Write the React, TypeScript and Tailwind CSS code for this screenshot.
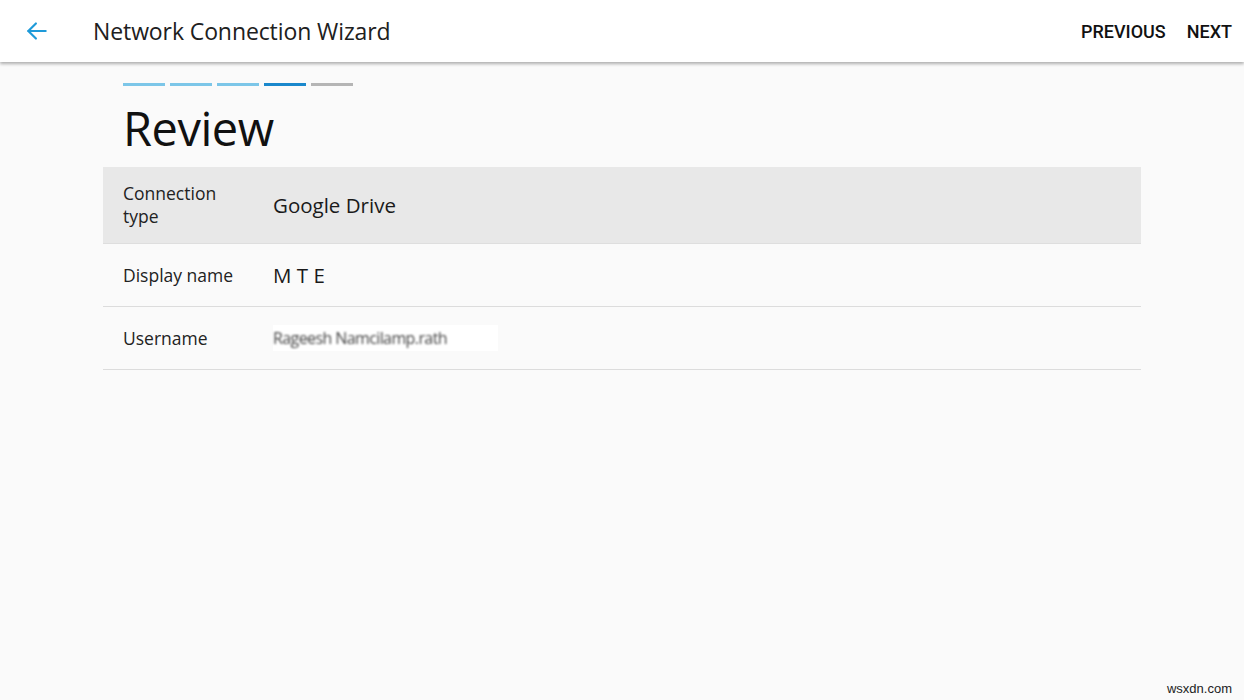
import React from "react";

const rows = [
	{ label: "Connection type", value: "Google Drive" },
	{ label: "Display name", value: "M T E" },
	{ label: "Username", value: "" },
];

export default function App() {
	return (
		<div
			className="relative w-[1244px] h-[700px] bg-[#fafafa] overflow-hidden"
			style={{ fontFamily: "'Open Sans', 'Noto Sans', sans-serif" }}
		>
			{/* App bar */}
			<header className="h-[62px] bg-white flex items-center shadow-[0_2px_3px_rgba(0,0,0,0.3)] relative z-10">
				<button type="button" className="w-[74px] flex items-center justify-center text-[#1e9ad9]">
					<svg width="26" height="26" viewBox="0 0 24 24" fill="none" stroke="currentColor" strokeWidth="2" strokeLinecap="round" strokeLinejoin="round">
						<path d="M20 12H4" />
						<path d="M11 5l-7 7 7 7" />
					</svg>
				</button>
				<h1 className="ml-[19px] text-[23px] text-[#202020] tracking-[-0.1px]">Network Connection Wizard</h1>
				<div
					className="ml-auto flex items-center gap-[21px] pr-[12px] text-[18px] font-medium text-[#111]"
					style={{ fontFamily: "Roboto, sans-serif" }}
				>
					<button type="button">PREVIOUS</button>
					<button type="button">NEXT</button>
				</div>
			</header>

			<main className="px-[103px] w-[1244px]">
				<div className="pl-[20px] pt-[21px] flex gap-[5px]">
					<span className="w-[42px] h-[3px] bg-[#7cc6e8]" />
					<span className="w-[42px] h-[3px] bg-[#7cc6e8]" />
					<span className="w-[42px] h-[3px] bg-[#7cc6e8]" />
					<span className="w-[42px] h-[3px] bg-[#1a88cc]" />
					<span className="w-[42px] h-[3px] bg-[#b5b5b5]" />
				</div>
				<h2 className="pl-[20px] mt-[6px] mb-[3px] text-[47px] leading-[72px] text-[#111] tracking-[-0.5px]">Review</h2>

				<div className="w-[1038px]">
					{rows.map((r, i) => (
						<div
							key={r.label}
							className={
								i === 0
									? "flex items-center h-[77px] bg-[#e8e8e8] border-b border-[#dedede]"
									: "flex items-center h-[63px] border-b border-[#dcdcdc]"
							}
						>
							<div className="w-[170px] shrink-0 pl-[20px] pr-[30px] text-[17.5px] leading-[23px] text-[#222]">{r.label}</div>
							{r.value ? (
								<div className="text-[20.5px] text-[#1a1a1a]">{r.value}</div>
							) : (
								<div className="w-[225px] h-[26px] bg-white flex items-center">
									<span className="text-[16px] text-[#444] blur-[1px] tracking-[-0.6px]">Rageesh Namcilamp.rath</span>
								</div>
							)}
						</div>
					))}
				</div>
			</main>

			<div
				className="absolute right-[12px] bottom-[2px] text-[13px] text-[#222]"
				style={{ fontFamily: "'Liberation Sans', sans-serif" }}
			>
				wsxdn.com
			</div>
		</div>
	);
}
